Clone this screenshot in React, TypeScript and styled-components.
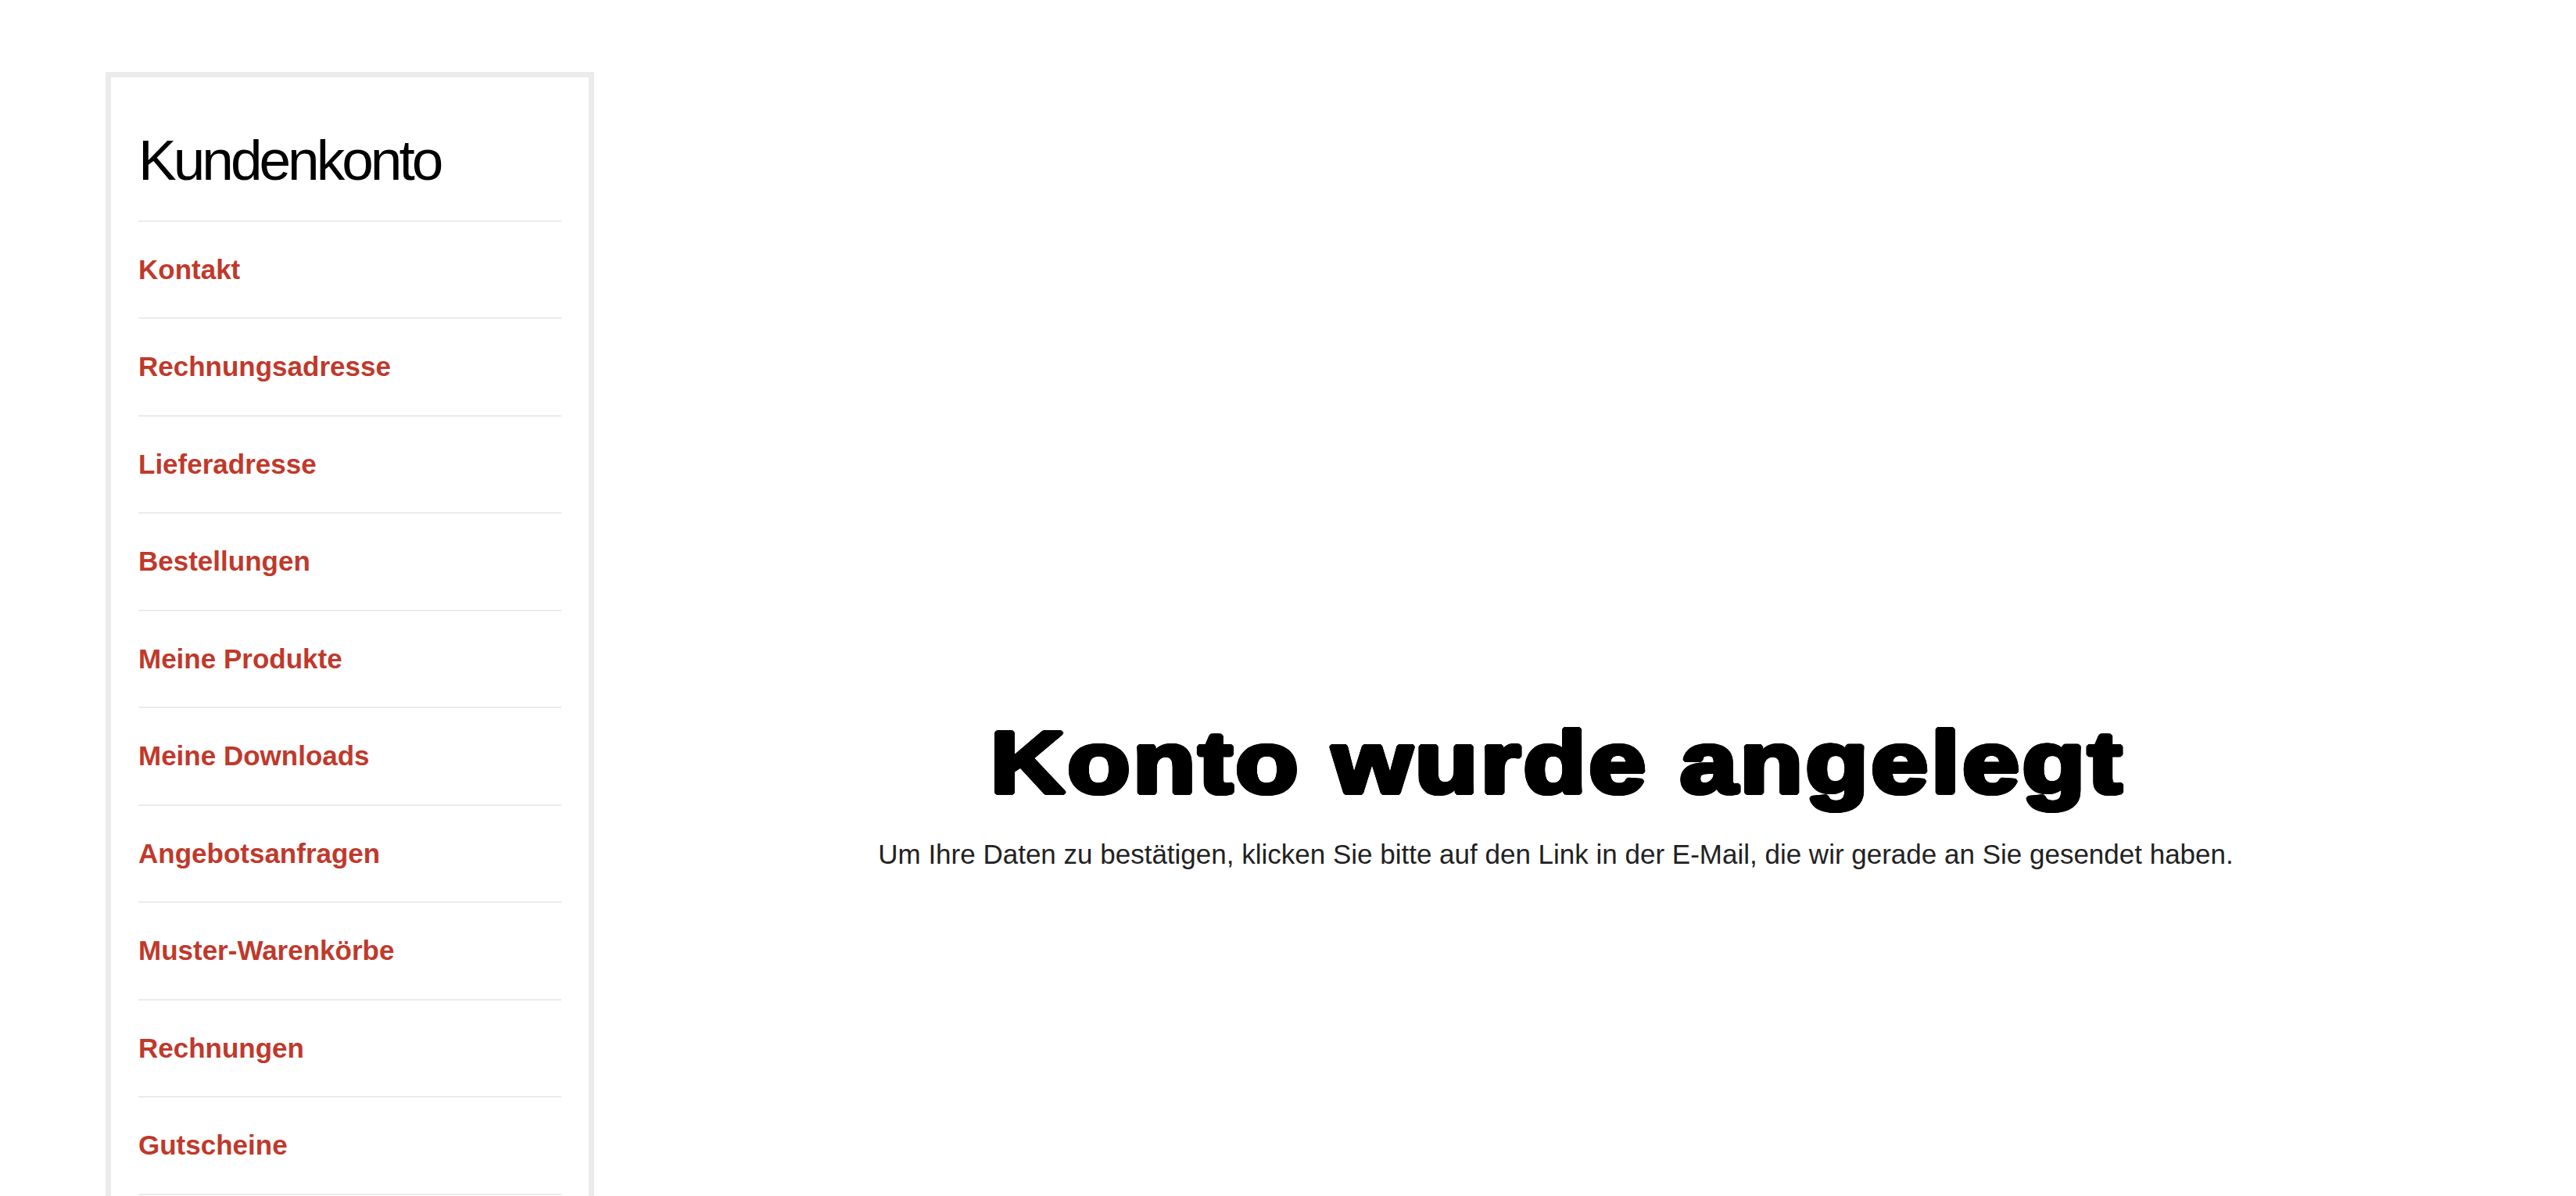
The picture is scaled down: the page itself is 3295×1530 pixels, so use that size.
import React from "react";
import styled, { createGlobalStyle } from "styled-components";

const GlobalStyle = createGlobalStyle`
  html, body {
    margin: 0;
    padding: 0;
    background: #ffffff;
  }
  body {
    font-family: "Liberation Sans", Arial, sans-serif;
    color: #222222;
  }
  * { box-sizing: border-box; }
`;

// ring of hard shadows used to thicken the bold face into a "black" weight
const heavyShadow = (radius: number, steps: number, color: string) =>
  Array.from({ length: steps }, (_, i) => {
    const a = (i / steps) * Math.PI * 2;
    const x = (Math.cos(a) * radius).toFixed(2);
    const y = (Math.sin(a) * radius).toFixed(2);
    return `${x}px ${y}px 0 ${color}`;
  })
    .concat([
      `${(radius * 0.5).toFixed(2)}px 0 0 ${color}`,
      `-${(radius * 0.5).toFixed(2)}px 0 0 ${color}`,
      `0 ${(radius * 0.5).toFixed(2)}px 0 ${color}`,
      `0 -${(radius * 0.5).toFixed(2)}px 0 ${color}`,
    ])
    .join(", ");

const Page = styled.div`
  display: flex;
  align-items: flex-start;
  gap: 60px;
  padding: 92px 135px 0 135px;
  min-height: 1530px;
`;

const Sidebar = styled.aside`
  flex: none;
  width: 625px;
  border: 7px solid #ebebeb;
  padding: 35px;
  background: #ffffff;
`;

const SidebarTitle = styled.h2`
  margin: 31px 0 36.5px 0;
  font-family: "Liberation Sans", Arial, sans-serif;
  font-weight: 400;
  font-size: 73px;
  line-height: 80.3px;
  letter-spacing: -4px;
  color: #000000;
`;

const NavList = styled.ul`
  list-style: none;
  margin: 0;
  padding: 0;
`;

const NavItem = styled.li`
  border-top: 2px solid #ebebeb;
  &:last-child {
    border-bottom: 2px solid #ebebeb;
  }
`;

const NavLink = styled.a`
  display: block;
  padding: 40px 0 41px 0;
  font-family: "Liberation Sans", Arial, sans-serif;
  font-weight: 700;
  font-size: 35px;
  line-height: 41.5px;
  color: #c0392b;
  text-decoration: none;
  cursor: pointer;
`;

const Main = styled.main`
  flex: 1;
  min-width: 0;
  padding-top: 817px;
  text-align: center;
`;

const Heading = styled.h1`
  display: inline-block;
  margin: 0;
  padding-left: 3px;
  font-family: "Liberation Sans", Arial, sans-serif;
  font-weight: 700;
  font-size: 112px;
  line-height: 134.4px;
  letter-spacing: 3px;
  color: #000000;
  text-shadow: ${heavyShadow(3, 16, "#000")};
  transform: scaleX(1.174);
  transform-origin: center;
  white-space: nowrap;
`;

const Message = styled.p`
  margin: 30px 0 0 0;
  font-family: "Liberation Sans", Arial, sans-serif;
  font-weight: 400;
  font-size: 35px;
  line-height: 40.25px;
  color: #222222;
  white-space: nowrap;
`;

const navItems = [
  "Kontakt",
  "Rechnungsadresse",
  "Lieferadresse",
  "Bestellungen",
  "Meine Produkte",
  "Meine Downloads",
  "Angebotsanfragen",
  "Muster-Warenkörbe",
  "Rechnungen",
  "Gutscheine",
];

export default function App() {
  return (
    <>
      <GlobalStyle />
      <Page>
        <Sidebar>
          <SidebarTitle>Kundenkonto</SidebarTitle>
          <NavList>
            {navItems.map((item) => (
              <NavItem key={item}>
                <NavLink>{item}</NavLink>
              </NavItem>
            ))}
          </NavList>
        </Sidebar>
        <Main>
          <Heading>Konto wurde angelegt</Heading>
          <Message>
            Um Ihre Daten zu bestätigen, klicken Sie bitte auf den Link in der
            E-Mail, die wir gerade an Sie gesendet haben.
          </Message>
        </Main>
      </Page>
    </>
  );
}
